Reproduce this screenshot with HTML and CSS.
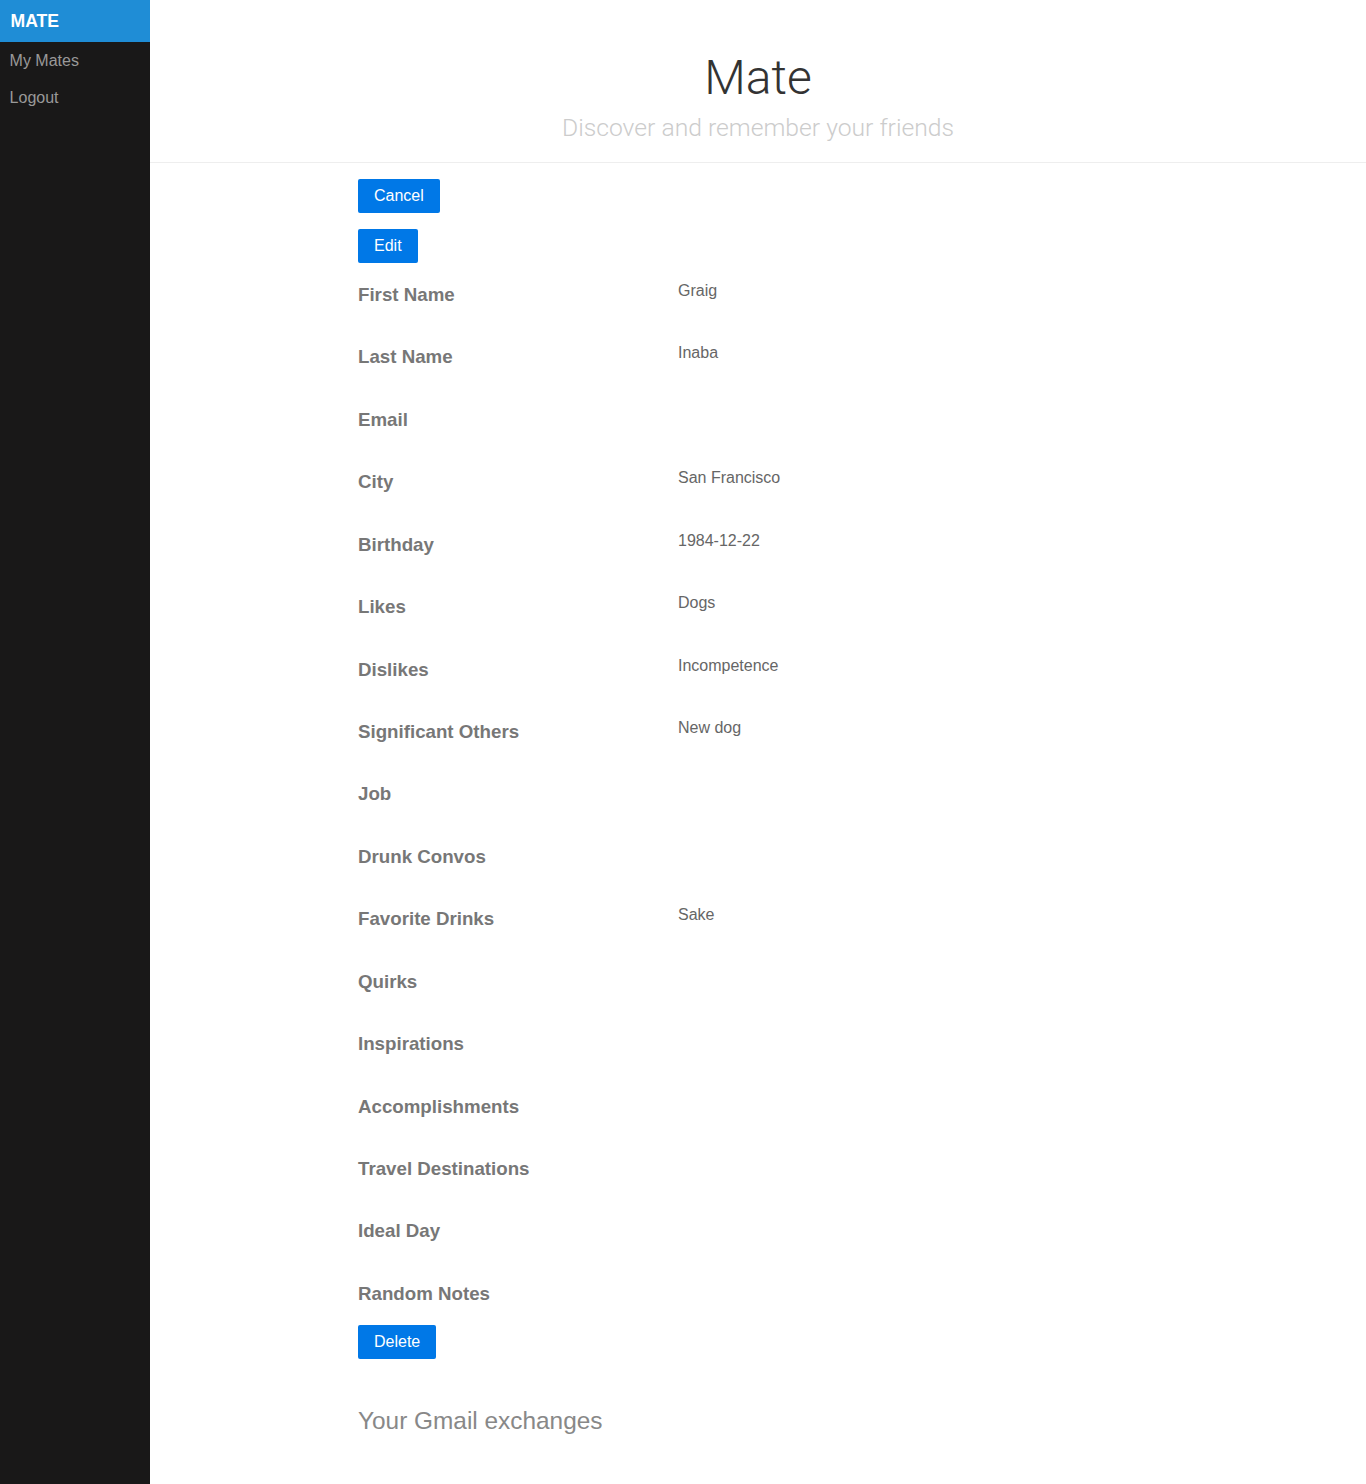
FILE: index.html
```html
<!DOCTYPE html>
<html lang="en">
<head>
<meta charset="utf-8">
<title>Mate</title>
<link rel="stylesheet" href="styles.css">
</head>
<body>
<div class="layout">
  <nav class="menu">
    <a class="menu-heading" href="#">Mate</a>
    <ul class="menu-list">
      <li><a href="#">My Mates</a></li>
      <li><a href="#">Logout</a></li>
    </ul>
  </nav>
  <main class="main">
    <header class="header">
      <h1>Mate</h1>
      <h2>Discover and remember your friends</h2>
    </header>
    <section class="content">
      <div class="actions">
        <div><button class="btn">Cancel</button></div>
        <div><button class="btn">Edit</button></div>
      </div>
      <div class="fields">
        <div class="row"><h3>First Name</h3><p>Graig</p></div>
        <div class="row"><h3>Last Name</h3><p>Inaba</p></div>
        <div class="row"><h3>Email</h3><p></p></div>
        <div class="row"><h3>City</h3><p>San Francisco</p></div>
        <div class="row"><h3>Birthday</h3><p>1984-12-22</p></div>
        <div class="row"><h3>Likes</h3><p>Dogs</p></div>
        <div class="row"><h3>Dislikes</h3><p>Incompetence</p></div>
        <div class="row"><h3>Significant Others</h3><p>New dog</p></div>
        <div class="row"><h3>Job</h3><p></p></div>
        <div class="row"><h3>Drunk Convos</h3><p></p></div>
        <div class="row"><h3>Favorite Drinks</h3><p>Sake</p></div>
        <div class="row"><h3>Quirks</h3><p></p></div>
        <div class="row"><h3>Inspirations</h3><p></p></div>
        <div class="row"><h3>Accomplishments</h3><p></p></div>
        <div class="row"><h3>Travel Destinations</h3><p></p></div>
        <div class="row"><h3>Ideal Day</h3><p></p></div>
        <div class="row"><h3>Random Notes</h3><p></p></div>
      </div>
      <div><button class="btn">Delete</button></div>
      <h2 class="subhead">Your Gmail exchanges</h2>
    </section>
  </main>
</div>
</body>
</html>
```

FILE: styles.css
```css
html, body {
  margin: 0;
  padding: 0;
}
body {
  font-family: "Liberation Sans", Arial, sans-serif;
  color: #777;
  font-size: 16px;
}
.layout {
  display: flex;
  min-height: 100vh;
}
.menu {
  width: 150px;
  flex: 0 0 150px;
  background: #191818;
}
.menu-heading {
  display: block;
  background: #1f8dd6;
  color: #fff;
  text-decoration: none;
  text-transform: uppercase;
  font-size: 17.6px;
  font-weight: bold;
  line-height: 20px;
  padding: 11px 10.5px;
}
.menu-list {
  list-style: none;
  margin: 0;
  padding: 0;
}
.menu-list a {
  display: block;
  color: #999;
  text-decoration: none;
  font-size: 16px;
  line-height: 18.4px;
  padding: 9.6px 0 9.6px 9.6px;
}
.main {
  flex: 1;
  min-width: 0;
}
.header {
  text-align: center;
  color: #333;
  padding: 40px 32px 0;
  border-bottom: 1px solid #eee;
}
.header h1 {
  margin: 9.6px 0;
  font-size: 48px;
  font-weight: 300;
  line-height: 55px;
  font-family: Roboto, "Liberation Sans", sans-serif;
}
.header h2 {
  margin: 0 0 20px;
  font-size: 24.7px;
  font-weight: 300;
  line-height: 28px;
  color: #ccc;
  font-family: Roboto, "Liberation Sans", sans-serif;
}
.content {
  max-width: 800px;
  margin: 0 auto;
  padding: 0 32px;
  line-height: 25.6px;
}
.actions {
  display: flex;
  flex-direction: column;
  gap: 16px;
  padding-top: 16px;
}
.btn {
  font-family: "Liberation Sans", Arial, sans-serif;
  font-size: 16px;
  line-height: 18px;
  padding: 8px 16px;
  background: #0078e7;
  color: #fff;
  border: 0;
  border-radius: 2px;
  cursor: pointer;
}
.row {
  display: grid;
  grid-template-columns: 320px 1fr;
  align-items: start;
  height: 62.44px;
}
.row h3 {
  margin: 18.72px 0;
  font-size: 18.72px;
  line-height: 25px;
  font-weight: bold;
  color: #777;
}
.row p {
  margin: 14.8px 0 16px;
  font-size: 16px;
  line-height: 25.6px;
  color: #666;
}
.subhead {
  margin: 49px 0 20px;
  font-size: 24.4px;
  font-weight: 300;
  color: #888;
  line-height: 25.6px;
}
```
